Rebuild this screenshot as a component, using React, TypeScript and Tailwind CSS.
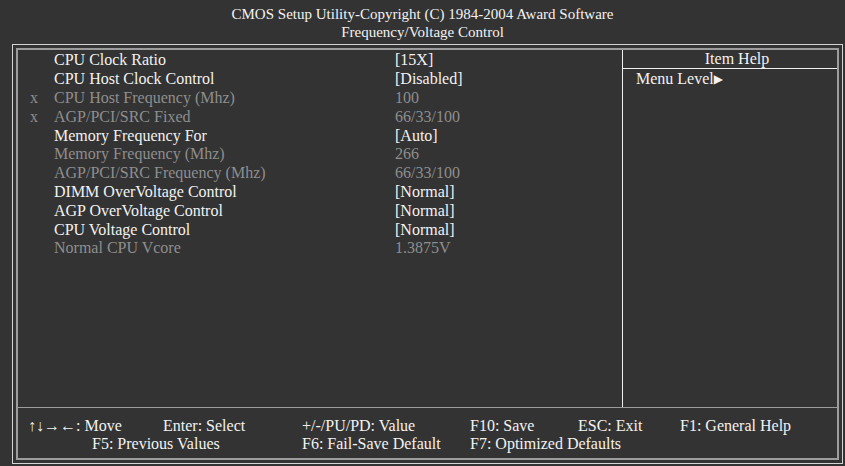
import type { FC } from 'react';

type Row = { mark?: string; label: string; value: string; dim?: boolean };

const rows: Row[] = [
  { label: 'CPU Clock Ratio', value: '[15X]' },
  { label: 'CPU Host Clock Control', value: '[Disabled]' },
  { mark: 'x', label: 'CPU Host Frequency (Mhz)', value: '100', dim: true },
  { mark: 'x', label: 'AGP/PCI/SRC Fixed', value: '66/33/100', dim: true },
  { label: 'Memory Frequency For', value: '[Auto]' },
  { label: 'Memory Frequency (Mhz)', value: '266', dim: true },
  { label: 'AGP/PCI/SRC Frequency (Mhz)', value: '66/33/100', dim: true },
  { label: 'DIMM OverVoltage Control', value: '[Normal]' },
  { label: 'AGP OverVoltage Control', value: '[Normal]' },
  { label: 'CPU Voltage Control', value: '[Normal]' },
  { label: 'Normal CPU Vcore', value: '1.3875V', dim: true },
];

const SettingRow: FC<{ row: Row }> = ({ row }) => (
  <div
    className={`flex h-[18.8px] items-center ${row.dim ? 'text-[#8e8e8e]' : 'text-[#f2f2f2]'}`}
  >
    <span className="w-[36px] shrink-0 pl-[12px]">{row.mark ?? ''}</span>
    <span className="w-[341px] shrink-0">{row.label}</span>
    <span>{row.value}</span>
  </div>
);

export default function App() {
  return (
    <div className="flex h-[466px] w-[845px] flex-col bg-[#333333] font-['Liberation_Serif',serif] text-[16px] text-[#f2f2f2]">
      {/* title */}
      <div className="flex h-[44px] flex-col items-center pt-[5px] text-[15px] leading-[18px]">
        <span>CMOS Setup Utility-Copyright (C) 1984-2004 Award Software</span>
        <span>Frequency/Voltage Control</span>
      </div>

      {/* double frame */}
      <div className="ml-[12px] mr-[2px] h-[420px] border border-[#d4d4d4] p-[3px]">
        <div className="flex h-full flex-col border-2 border-[#9c9c9c]">
          <div className="flex min-h-0 flex-1">
            <div className="flex-1 pt-[1px] leading-[18px]">
              {rows.map((r) => (
                <SettingRow key={r.label} row={r} />
              ))}
            </div>
            <div className="flex w-[215px] flex-col border-l border-[#f0f0f0]">
              <div className="h-[19px] border-b border-[#f0f0f0] pl-[14px] text-center leading-[18px]">
                Item Help
              </div>
              <div className="flex items-center pl-[13px] pt-[1px] leading-[18px]">
                Menu Level
                <span className="font-['DejaVu_Sans',sans-serif] text-[12px]">▶</span>
              </div>
            </div>
          </div>

          {/* key legend */}
          <div className="h-[51px] border-t border-[#9c9c9c] pt-[9px] leading-[18px]">
            <div className="flex">
              <span className="w-[145px] pl-[10px]">↑↓→←: Move</span>
              <span className="w-[139px]">Enter: Select</span>
              <span className="w-[168px]">+/-/PU/PD: Value</span>
              <span className="w-[108px]">F10: Save</span>
              <span className="w-[102px]">ESC: Exit</span>
              <span>F1: General Help</span>
            </div>
            <div className="flex">
              <span className="w-[284px] pl-[74px]">F5: Previous Values</span>
              <span className="w-[168px]">F6: Fail-Save Default</span>
              <span>F7: Optimized Defaults</span>
            </div>
          </div>
        </div>
      </div>
    </div>
  );
}
